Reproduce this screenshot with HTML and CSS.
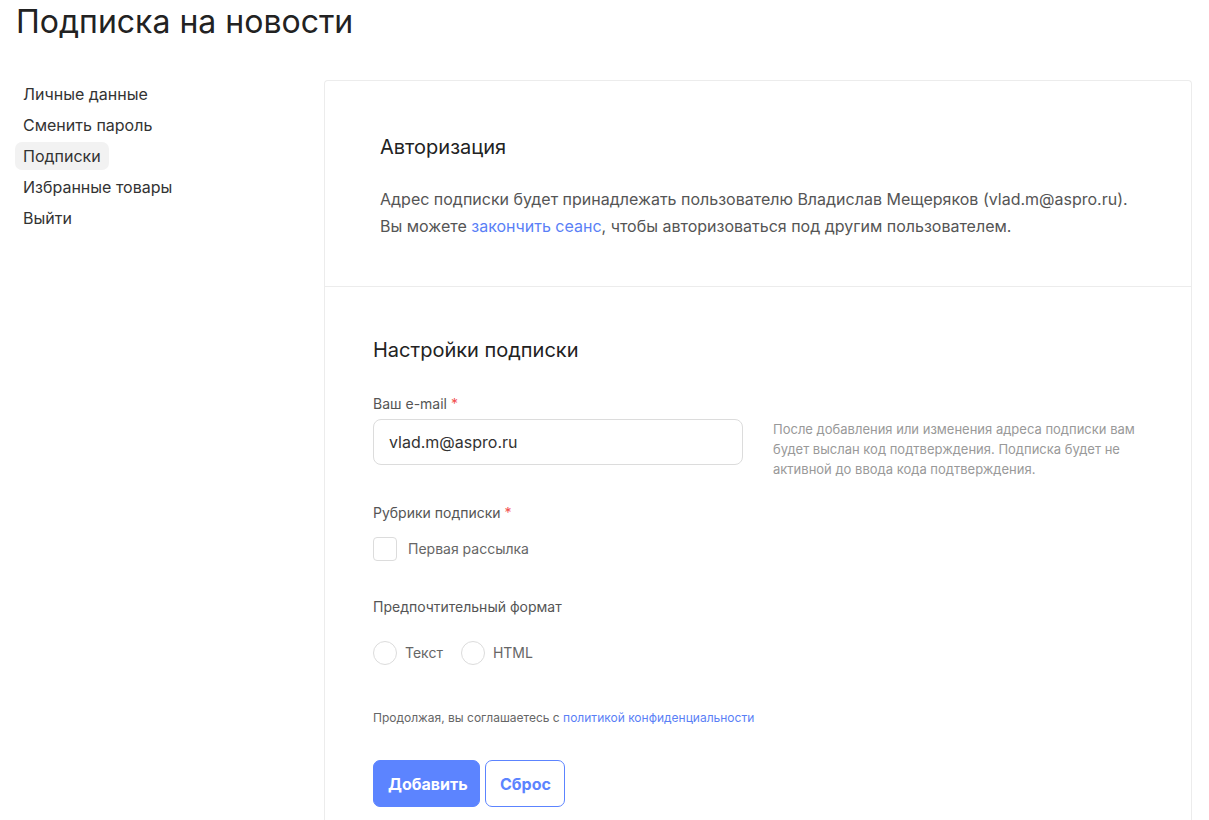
FILE: index.html
```html
<!DOCTYPE html>
<html lang="ru">
<head>
<meta charset="utf-8">
<title>Подписка на новости</title>
<link rel="stylesheet" href="styles.css">
</head>
<body>
<h1 class="page-title">Подписка на новости</h1>
<div class="layout">
  <nav class="sidebar">
    <a class="nav-item" href="#">Личные данные</a>
    <a class="nav-item" href="#">Сменить пароль</a>
    <a class="nav-item active" href="#">Подписки</a>
    <a class="nav-item" href="#">Избранные товары</a>
    <a class="nav-item" href="#">Выйти</a>
  </nav>
  <main class="card">
    <section class="section auth">
      <h2 class="section-title">Авторизация</h2>
      <p class="auth-text">Адрес подписки будет принадлежать пользователю Владислав Мещеряков (vlad.m@aspro.ru).<br>Вы можете <a class="link" href="#">закончить сеанс</a>, чтобы авторизоваться под другим пользователем.</p>
    </section>
    <section class="section settings">
      <h2 class="section-title">Настройки подписки</h2>
      <div class="field">
        <div class="label">Ваш e-mail <span class="req">*</span></div>
        <div class="email-row">
          <div class="input">vlad.m@aspro.ru</div>
          <div class="hint">После добавления или изменения адреса подписки вам будет выслан код подтверждения. Подписка будет не активной до ввода кода подтверждения.</div>
        </div>
      </div>
      <div class="field rubrics">
        <div class="label">Рубрики подписки <span class="req">*</span></div>
        <label class="check-row"><span class="checkbox"></span><span class="opt-text check-text">Первая рассылка</span></label>
      </div>
      <div class="field format">
        <div class="label">Предпочтительный формат</div>
        <div class="radio-row">
          <label class="radio-item"><span class="radio"></span><span class="opt-text">Текст</span></label>
          <label class="radio-item"><span class="radio"></span><span class="opt-text">HTML</span></label>
        </div>
      </div>
      <p class="policy">Продолжая, вы соглашаетесь с <a class="link" href="#">политикой конфиденциальности</a></p>
      <div class="buttons">
        <button class="btn btn-primary">Добавить</button>
        <button class="btn btn-outline">Сброс</button>
      </div>
    </section>
  </main>
</div>
</body>
</html>
```
FILE: styles.css
```css
* { box-sizing: border-box; }
html, body { margin: 0; padding: 0; background: #fff; }
body {
  font-family: Inter, "Noto Sans", sans-serif;
  color: #333;
  overflow: hidden;
  height: 820px;
}
.page-title {
  margin: 0;
  padding: 2px 0 0 16px;
  font-size: 32px;
  line-height: 40px;
  font-weight: 400;
  color: #222;
  letter-spacing: 0;
}
.layout {
  display: flex;
  padding: 38px 18px 0 15px;
}
.sidebar {
  width: 309px;
  flex-shrink: 0;
  display: flex;
  flex-direction: column;
  align-items: flex-start;
  gap: 3px;
}
.nav-item {
  display: block;
  height: 28px;
  line-height: 28px;
  padding: 0 8px;
  font-size: 16px;
  color: #333;
  text-decoration: none;
  border-radius: 7px;
}
.nav-item.active { background: #f2f2f2; }
.card {
  flex: 1;
  border: 1px solid #ececec;
  border-bottom: none;
  border-radius: 4px 4px 0 0;
  height: 760px;
}
.section-title {
  margin: 0;
  font-size: 20px;
  line-height: 28px;
  font-weight: 400;
  color: #222;
}
.auth {
  padding: 52px 55px 46px;
  border-bottom: 1px solid #ececec;
}
.auth-text {
  margin: 25px 0 0;
  font-size: 16px;
  line-height: 27px;
  color: #555;
}
.link { color: #5a7ff6; text-decoration: none; }
.settings { padding: 49px 48px 0; }
.label {
  font-size: 14px;
  line-height: 20px;
  color: #555;
}
.req { color: #f24e4e; }
.field { margin-top: 30px; }
.email-row {
  display: flex;
  align-items: flex-start;
  gap: 30px;
  margin-top: 5px;
}
.input {
  width: 370px;
  height: 46px;
  border: 1px solid #dcdcdc;
  border-radius: 8px;
  padding: 0 15px;
  line-height: 44px;
  font-size: 16px;
  color: #333;
}
.hint {
  width: 370px;
  font-size: 13px;
  line-height: 20px;
  color: #999;
}
.rubrics { margin-top: 24px; }
.check-row {
  display: flex;
  align-items: center;
  margin-top: 14px;
}
.checkbox {
  width: 24px;
  height: 24px;
  border: 1px solid #dcdcdc;
  border-radius: 4px;
  flex-shrink: 0;
}
.opt-text {
  font-size: 14px;
  line-height: 20px;
  color: #666;
  margin-left: 8px;
}
.check-text { margin-left: 11px; }
.format { margin-top: 36px; }
.radio-row {
  display: flex;
  gap: 18px;
  margin-top: 24px;
}
.radio-item {
  display: flex;
  align-items: center;
}
.radio {
  width: 24px;
  height: 24px;
  border: 1px solid #dcdcdc;
  border-radius: 50%;
  flex-shrink: 0;
}
.policy {
  margin: 44px 0 0;
  font-size: 12px;
  line-height: 18px;
  color: #666;
}
.buttons {
  display: flex;
  gap: 5px;
  margin-top: 33px;
}
.btn {
  height: 47px;
  border-radius: 7px;
  font-family: Inter, "Noto Sans", sans-serif;
  font-size: 16px;
  font-weight: 700;
  padding: 0 14px;
  cursor: pointer;
}
.btn-primary {
  width: 107px;
  background: #5c84ff;
  border: 1px solid #5c84ff;
  color: #fff;
}
.btn-outline {
  width: 80px;
  background: #fff;
  border: 1px solid #5c84ff;
  color: #5c84ff;
}
```
